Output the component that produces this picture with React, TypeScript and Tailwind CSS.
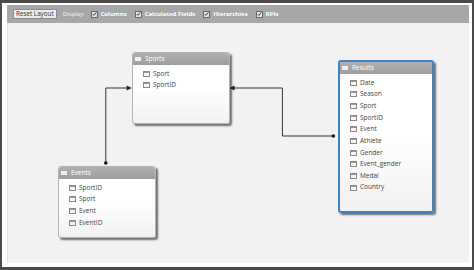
import React from 'react'

type Table = {
  name: string
  fields: string[]
  left: number
  top: number
  width: number
  height: number
  selected?: boolean
}

const tables: Table[] = [
  { name: 'Sports', fields: ['Sport', 'SportID'], left: 124, top: 29, width: 98, height: 72 },
  {
    name: 'Results',
    fields: ['Date', 'Season', 'Sport', 'SportID', 'Event', 'Athlete', 'Gender', 'Event_gender', 'Medal', 'Country'],
    left: 330,
    top: 37,
    width: 96,
    height: 153,
    selected: true,
  },
  { name: 'Events', fields: ['SportID', 'Sport', 'Event', 'EventID'], left: 50, top: 143, width: 98, height: 72 },
]

function Check({ label }: { label: string }) {
  return (
    <div className="flex items-center gap-[3px]">
      <span className="flex h-[7px] w-[7px] items-center justify-center border border-[#6a6a6a] bg-[#e4e4e4]">
        <svg viewBox="0 0 8 8" className="h-[6px] w-[6px]">
          <path d="M1 4.2 L3 6.2 L7 1.2" stroke="#333" strokeWidth="1.4" fill="none" />
        </svg>
      </span>
      <span className="font-bold text-white">{label}</span>
    </div>
  )
}

function FieldIcon() {
  return (
    <span className="flex h-[6px] w-[7px] flex-col border border-[#8a8a8a] bg-[#f4f4f4]">
      <span className="h-[1px] bg-[#9a9a9a]" />
    </span>
  )
}

function TableCard({ t }: { t: Table }) {
  return (
    <div
      className={`absolute flex flex-col overflow-hidden rounded-[3px] bg-gradient-to-b from-white via-white to-[#f1f1f1] shadow-[2px_2px_2px_rgba(0,0,0,0.55)] ${
        t.selected ? 'border-2 border-[#3d85c6]' : 'border border-[#b4b4b4]'
      }`}
      style={{ left: t.left, top: t.top, width: t.width, height: t.height }}
    >
      <div className="flex h-[12px] shrink-0 items-center gap-[4px] bg-gradient-to-b from-[#b0b0b0] to-[#9e9e9e] pl-[2px] text-white">
        <span className="h-[4px] w-[6px] bg-[#eeeeee]" />
        <span>{t.name}</span>
      </div>
      <div className="flex flex-col pt-[3px]">
        {t.fields.map((f) => (
          <div key={f} className="flex h-[11.67px] items-center gap-[3px] pl-[10px] text-[#444]">
            <FieldIcon />
            <span>{f}</span>
          </div>
        ))}
      </div>
    </div>
  )
}

export default function App() {
  return (
    <div
      className="h-[270px] w-[474px] bg-[#4b4b4b] pb-[3px] pl-[2px] pr-[2px] pt-[3px] text-[6.5px] leading-none"
      style={{ fontFamily: '"Open Sans", "Noto Sans", sans-serif' }}
    >
      <div className="flex h-full flex-col bg-white pb-[4px] pl-[5px] pr-[3px] pt-[2px]">
        {/* Toolbar */}
        <div className="flex h-[18px] shrink-0 items-center gap-[6px] bg-[#a7a7a7] pl-[6px] text-[6px]">
          <button className="h-[10px] border border-[#8c8c8c] bg-[#ececec] px-[2px] text-[6.3px] leading-none text-[#333]">
            Reset Layout
          </button>
          <span className="text-[#f4f4f4]">Display:</span>
          <div className="flex items-center gap-[8px]">
            <Check label="Columns" />
            <Check label="Calculated Fields" />
            <Check label="Hierarchies" />
            <Check label="KPIs" />
          </div>
        </div>

        {/* Diagram canvas */}
        <div className="relative flex-1 border-l border-[#dedede] bg-[#f2f2f2]">
          <svg className="absolute inset-0 h-full w-full" viewBox="0 0 462 240" preserveAspectRatio="none">
            <polyline points="98,140 98,65 121,65" stroke="#333" strokeWidth="1" fill="none" />
            <path d="M124 65 L119 62.5 L119 67.5 Z" fill="#222" />
            <circle cx="98" cy="140" r="1.8" fill="#111" />
            <polyline points="326,113 275,113 275,65 225,65" stroke="#333" strokeWidth="1" fill="none" />
            <path d="M222 65 L227 62.5 L227 67.5 Z" fill="#222" />
            <circle cx="326" cy="113" r="1.8" fill="#111" />
          </svg>
          {tables.map((t) => (
            <TableCard key={t.name} t={t} />
          ))}
        </div>
      </div>
    </div>
  )
}
